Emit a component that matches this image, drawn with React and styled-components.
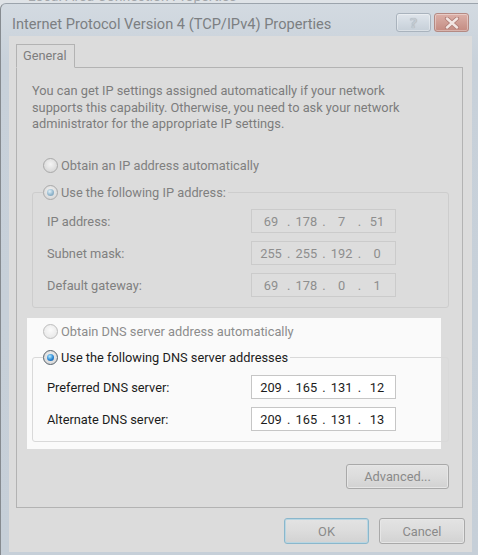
import styled, { createGlobalStyle } from 'styled-components';

const GlobalStyle = createGlobalStyle`
  html, body {
    margin: 0;
    padding: 0;
  }
  body {
    background: #dfe3e7;
    font-family: Roboto, "Liberation Sans", sans-serif;
  }
`

const Screen = styled.div`
  width: 478px;
  height: 555px;
  overflow: hidden;
  background: #dfe3e7;
`

const BackWindow = styled.div`
  height: 3px;
  overflow: hidden;
  padding-left: 28px;
  span {
    display: block;
    margin-top: -12px;
    font-size: 14px;
    line-height: 16px;
    color: #a3a7ab;
  }
`

const Window = styled.div`
  height: 552px;
  box-sizing: border-box;
  border-left: 1px solid #868b90;
  border-top: 1px solid #9ca4ac;
  border-top-left-radius: 6px;
  background: linear-gradient(#d3dae1, #c8d1da 60px, #c6cfd8);
  padding: 0 6px 3px 8px;
  display: flex;
  flex-direction: column;
`

const TitleBar = styled.div`
  height: 32px;
  box-sizing: border-box;
  padding: 9px 3px 0 3px;
  display: flex;
  align-items: flex-start;
`

const Title = styled.div`
  flex: 1;
  margin-top: 2px;
  font-size: 14.6px;
  line-height: 18px;
  color: #7c7f82;
  white-space: nowrap;
`

const CaptionButtons = styled.div`
  display: flex;
  gap: 3px;
`

const CaptionButton = styled.div`
  width: 35px;
  height: 19px;
  box-sizing: border-box;
  border-radius: 3px;
  border: 1px solid ${p => (p.$close ? '#b48a83' : '#a9b3bd')};
  background: ${p =>
    p.$close
      ? 'linear-gradient(#dcb0a8, #cf9e95 50%, #c48b81)'
      : 'linear-gradient(#dfe5eb, #d2dae2 50%, #c6cfd8)'};
  box-shadow: inset 0 0 0 1px rgba(255, 255, 255, 0.35);
  display: flex;
  align-items: center;
  justify-content: center;
  font-family: "DejaVu Sans", sans-serif;
  font-weight: bold;
  font-size: 14px;
  color: #c3cad1;
  text-shadow: 0 0 1px #9aa3ac;
`

const Client = styled.div`
  flex: 1;
  background: #dcdcdc;
  padding: 8px 7px 8px 7px;
  display: flex;
  flex-direction: column;
`

const Tabs = styled.div`
  display: flex;
`

const Tab = styled.div`
  position: relative;
  z-index: 1;
  width: 59px;
  height: 24px;
  box-sizing: border-box;
  margin-bottom: -1px;
  border: 1px solid #b3b3b3;
  border-bottom: 1px solid #dcdcdc;
  padding-left: 6px;
  font-size: 12.8px;
  line-height: 22px;
  color: #7e7e7e;
`

const TabPanel = styled.div`
  margin-right: 2px;
  height: 441px;
  box-sizing: border-box;
  border: 1px solid #b3b3b3;
  padding: 15px 13px 0 15px;
  display: flex;
  flex-direction: column;
`

const Description = styled.p`
  margin: 0;
  font-size: 12.8px;
  line-height: 16.5px;
  color: #7c7c7c;
  white-space: nowrap;
`

const RadioRow = styled.div`
  height: 20px;
  display: flex;
  align-items: center;
  padding-left: ${p => (p.$legend ? '0' : '11px')};
  margin-top: ${p => p.$top || 0}px;
  font-size: 12.8px;
  color: ${p => (p.$lit && p.$checked ? '#1c1c1c' : p.$lit ? '#8c8c8c' : '#808080')};
  white-space: nowrap;
`

const RadioCircle = styled.span`
  width: 15px;
  height: 15px;
  box-sizing: border-box;
  border-radius: 50%;
  flex-shrink: 0;
  margin-right: 3px;
  border: 1px solid ${p => (p.$lit ? (p.$checked ? '#56616b' : '#bdbdbd') : '#a9a9a9')};
  background: ${p =>
    p.$lit && !p.$checked
      ? 'radial-gradient(circle at 50% 40%, #fbfbfb, #e3e3e3)'
      : 'radial-gradient(circle at 50% 40%, #f4f4f4, #cfcfcf)'};
  display: flex;
  align-items: center;
  justify-content: center;

  &::after {
    content: '';
    display: ${p => (p.$checked ? 'block' : 'none')};
    width: 7px;
    height: 7px;
    border-radius: 50%;
    background: ${p =>
      p.$lit
        ? 'radial-gradient(circle at 40% 35%, #b4ecff, #2b86d3 55%, #0f4f92)'
        : 'radial-gradient(circle at 40% 35%, #e0f0f8, #93b7cd 55%, #7399b2)'};
  }
`

const Group = styled.fieldset`
  margin: 0;
  min-width: 0;
  width: 417px;
  box-sizing: border-box;
  border: 1px solid ${p => (p.$lit ? '#d9d9d9' : '#cdcdcd')};
  border-radius: 3px;
  padding: ${p => (p.$lit ? 8 : 7)}px 0 10px 10px;
  margin-top: ${p => p.$top || 0}px;
  display: flex;
  flex-direction: column;
  gap: 8px;

  legend {
    padding: 0 2px 0 0;
  }
`

const FieldRow = styled.div`
  display: grid;
  grid-template-columns: 208px 145px;
  align-items: center;
`

const FieldLabel = styled.span`
  padding-left: 4px;
  font-size: 12.8px;
  color: ${p => (p.$lit ? '#1c1c1c' : '#808080')};
`

const IpBox = styled.div`
  height: 24px;
  box-sizing: border-box;
  border: 1px solid ${p => (p.$lit ? '#c6c6c6' : '#cbcbcb')};
  background: ${p => (p.$lit ? '#ffffff' : '#dddddd')};
  padding-left: 4px;
  display: flex;
  align-items: center;
  font-size: 12.8px;
  color: ${p => (p.$lit ? '#1c1c1c' : '#8e8e8e')};
`

const Octet = styled.span`
  width: 30px;
  text-align: center;
`

const Dot = styled.span`
  width: 5.33px;
  text-align: center;
`

const LitArea = styled.div`
  margin: 10px 0 0 -5px;
  width: 414px;
  box-sizing: border-box;
  background: #fafafa;
  padding: 3px 0 7px 5px;
`

const PanelFooter = styled.div`
  margin-top: 15px;
  display: flex;
  justify-content: flex-end;
`

const Button = styled.div`
  width: ${p => p.$w}px;
  height: ${p => p.$h}px;
  box-sizing: border-box;
  border-radius: 3px;
  border: 1px solid ${p => (p.$default ? '#8ab7cc' : '#a9a9a9')};
  background: linear-gradient(#e3e3e3, #dcdcdc 50%, #d2d2d2);
  box-shadow: ${p => (p.$default ? 'inset 0 0 0 1px #b9d6e2' : 'inset 0 0 0 1px #e6e6e6')};
  display: flex;
  align-items: center;
  justify-content: center;
  font-size: 12.8px;
  color: #8a8a8a;
`

const DialogButtons = styled.div`
  margin-top: 10px;
  display: flex;
  justify-content: flex-end;
  gap: 10px;
`

const CloseGlyph = () => (
  <svg width="16" height="12" viewBox="0 0 16 12">
    <path d="M3 1.5 L13 10.5 M13 1.5 L3 10.5" stroke="#b07e76" strokeWidth="4.2" strokeLinecap="round" />
    <path d="M3 1.5 L13 10.5 M13 1.5 L3 10.5" stroke="#f2e6e3" strokeWidth="2.4" strokeLinecap="round" />
  </svg>
)

const Ip = ({ value, lit }) => {
  const parts = value.split('.')
  return (
    <IpBox $lit={lit}>
      {parts.map((p, idx) => (
        <span key={idx} style={{ display: 'contents' }}>
          {idx > 0 && <Dot>.</Dot>}
          <Octet>{p}</Octet>
        </span>
      ))}
    </IpBox>
  )
}

const Radio = ({ label, checked, lit, legend, top }) => (
  <RadioRow $lit={lit} $checked={checked} $legend={legend} $top={top}>
    <RadioCircle $lit={lit} $checked={checked} />
    {label}
  </RadioRow>
)

const ipRows = [
  { label: 'IP address:', value: '69.178.7.51' },
  { label: 'Subnet mask:', value: '255.255.192.0' },
  { label: 'Default gateway:', value: '69.178.0.1' },
]

const dnsRows = [
  { label: 'Preferred DNS server:', value: '209.165.131.12' },
  { label: 'Alternate DNS server:', value: '209.165.131.13' },
]

const App = () => {
  return (
    <Screen>
      <GlobalStyle />
      <BackWindow>
        <span>Local Area Connection Properties</span>
      </BackWindow>
      <Window>
        <TitleBar>
          <Title>Internet Protocol Version 4 (TCP/IPv4) Properties</Title>
          <CaptionButtons>
            <CaptionButton>?</CaptionButton>
            <CaptionButton $close>
              <CloseGlyph />
            </CaptionButton>
          </CaptionButtons>
        </TitleBar>
        <Client>
          <Tabs>
            <Tab>General</Tab>
          </Tabs>
          <TabPanel>
            <Description>
              You can get IP settings assigned automatically if your network
              <br />
              supports this capability. Otherwise, you need to ask your network
              <br />
              administrator for the appropriate IP settings.
            </Description>

            <Radio label="Obtain an IP address automatically" top={22.5} />
            <Group $top={7}>
              <legend>
                <Radio label="Use the following IP address:" checked legend />
              </legend>
              {ipRows.map(r => (
                <FieldRow key={r.label}>
                  <FieldLabel>{r.label}</FieldLabel>
                  <Ip value={r.value} />
                </FieldRow>
              ))}
            </Group>

            <LitArea>
              <Radio label="Obtain DNS server address automatically" lit />
              <Group $lit $top={6}>
                <legend>
                  <Radio label="Use the following DNS server addresses" checked lit legend />
                </legend>
                {dnsRows.map(r => (
                  <FieldRow key={r.label}>
                    <FieldLabel $lit>{r.label}</FieldLabel>
                    <Ip value={r.value} lit />
                  </FieldRow>
                ))}
              </Group>
            </LitArea>

            <PanelFooter>
              <Button $w={103} $h={25}>Advanced...</Button>
            </PanelFooter>
          </TabPanel>
          <DialogButtons>
            <Button $w={85} $h={26} $default>OK</Button>
            <Button $w={86} $h={26}>Cancel</Button>
          </DialogButtons>
        </Client>
      </Window>
    </Screen>
  )
}

export default App
